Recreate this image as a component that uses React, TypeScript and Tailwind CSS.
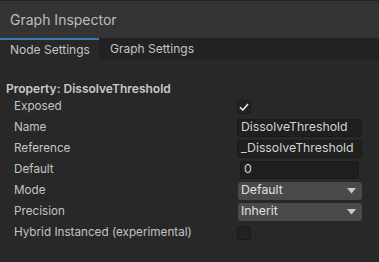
import React from 'react';

const Row: React.FC<{ label: string; children?: React.ReactNode }> = ({ label, children }) => (
  <div className="flex h-[21px] items-center">
    <div className="w-[223px] shrink-0 pl-[14px] text-[11.7px] text-[#c4c4c4]">{label}</div>
    <div className="flex flex-1 items-center">{children}</div>
  </div>
);

const TextField: React.FC<{ value: string; className?: string }> = ({ value, className }) => (
  <div
    className={`flex h-[18px] items-center rounded-[3px] border border-[#1a1a1a] bg-[#1f1f1f] px-[3px] text-[12.3px] text-[#d2d2d2] ${className ?? ''}`}
  >
    {value}
  </div>
);

const Dropdown: React.FC<{ value: string }> = ({ value }) => (
  <div className="ml-[1px] flex h-[18px] w-[124px] items-center justify-between rounded-[3px] bg-[#4a4a4a] pl-[3px] pr-[6px] text-[12.3px] text-[#e0e0e0]">
    <span>{value}</span>
    <svg width="9" height="6" viewBox="0 0 9 6">
      <path d="M0 0 H9 L4.5 5.5 Z" fill="#c8c8c8" />
    </svg>
  </div>
);

const Checkbox: React.FC<{ checked?: boolean }> = ({ checked }) => (
  <div className="flex h-[14px] w-[14px] items-center justify-center rounded-[2px] border border-[#1a1a1a] bg-[#222222]">
    {checked && (
      <svg width="10" height="8" viewBox="0 0 10 8">
        <path d="M1 4.2 L3.8 7 L9 1" stroke="#e8e8e8" strokeWidth="1.6" fill="none" />
      </svg>
    )}
  </div>
);

export default function App() {
  return (
    <div
      className="h-[262px] w-[379px] overflow-hidden bg-[#282828]"
      style={{ fontFamily: 'Inter, "Noto Sans", sans-serif' }}
    >
      {/* Title bar */}
      <div className="flex h-[38px] items-center rounded-tr-[4px] border-t border-[#222] bg-[#343434] pl-[10px] text-[14px] text-[#bdbdbd]">
        Graph Inspector
      </div>

      {/* Tabs */}
      <div className="flex h-[21px] bg-[#222222] text-[12px] text-[#c4c4c4]">
        <div className="flex w-[99px] items-center border-t-2 border-[#3a79bb] bg-[#282828] pl-[10px]">
          Node Settings
        </div>
        <div className="flex items-center pl-[11px]">Graph Settings</div>
      </div>

      {/* Content */}
      <div className="pt-[23px]">
        <div className="flex h-[14px] items-center pl-[6px] text-[12px] font-semibold text-[#c8c8c8]">
          Property: DissolveThreshold
        </div>
        <Row label="Exposed">
          <div className="ml-[14px]">
            <Checkbox checked />
          </div>
        </Row>
        <Row label="Name">
          <TextField value="DissolveThreshold" className="ml-[14px] w-[125px]" />
        </Row>
        <Row label="Reference">
          <TextField value="_DissolveThreshold" className="ml-[14px] w-[125px]" />
        </Row>
        <Row label="Default">
          <TextField value="0" className="ml-[17px] w-[119px]" />
        </Row>
        <Row label="Mode">
          <div className="ml-[14px]">
            <Dropdown value="Default" />
          </div>
        </Row>
        <Row label="Precision">
          <div className="ml-[14px]">
            <Dropdown value="Inherit" />
          </div>
        </Row>
        <Row label="Hybrid Instanced (experimental)">
          <div className="ml-[14px]">
            <Checkbox />
          </div>
        </Row>
      </div>
    </div>
  );
}
